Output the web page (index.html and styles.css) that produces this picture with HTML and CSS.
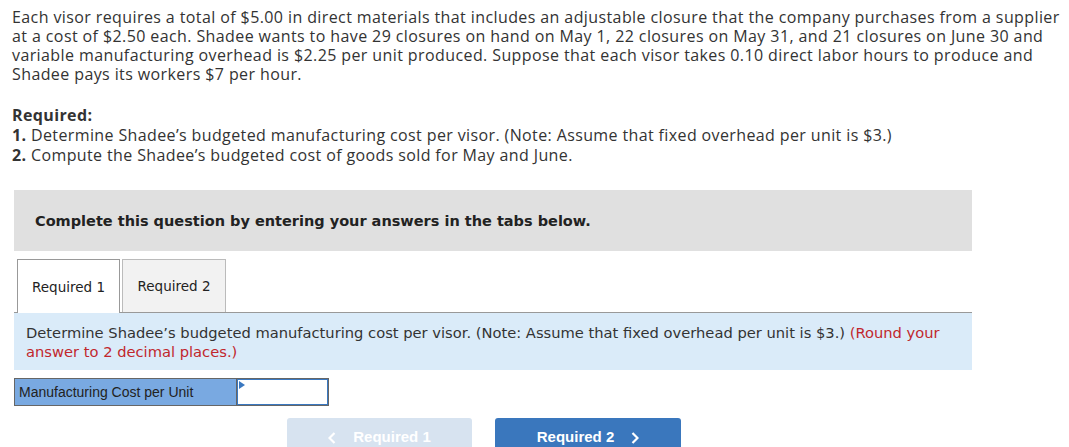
FILE: index.html
```html
<!DOCTYPE html>
<html>
<head>
<meta charset="utf-8">
<link rel="stylesheet" href="styles.css">
</head>
<body>
<div class="page">
  <p class="intro">Each visor requires a total of $5.00 in direct materials that includes an adjustable closure that the company purchases from a supplier at a cost of $2.50 each. Shadee wants to have 29 closures on hand on May 1, 22 closures on May 31, and 21 closures on June 30 and variable manufacturing overhead is $2.25 per unit produced. Suppose that each visor takes 0.10 direct labor hours to produce and Shadee pays its workers $7 per hour.</p>
  <div class="required">
    <div class="req-title">Required:</div>
    <div><b>1.</b> Determine Shadee’s budgeted manufacturing cost per visor. (Note: Assume that fixed overhead per unit is $3.)</div>
    <div><b>2.</b> Compute the Shadee’s budgeted cost of goods sold for May and June.</div>
  </div>
  <div class="panel">
    <div class="banner">Complete this question by entering your answers in the tabs below.</div>
    <div class="tabs">
      <div class="tab active">Required 1</div>
      <div class="tab">Required 2</div>
    </div>
    <div class="question">Determine Shadee’s budgeted manufacturing cost per visor. (Note: Assume that fixed overhead per unit is $3.) <span class="red">(Round your</span> <span class="red">answer to 2 decimal places.)</span></div>
    <div class="answer-row">
      <div class="label">Manufacturing Cost per Unit</div>
      <div class="input"><span class="flag"></span></div>
    </div>
    <div class="nav">
      <div class="btn prev"><svg class="chev" width="8" height="12" viewBox="0 0 8 12"><polyline points="6.5,1 1.5,6 6.5,11" fill="none" stroke="#fff" stroke-width="2.2"/></svg>Required 1</div>
      <div class="btn next">Required 2<svg class="chev" width="8" height="12" viewBox="0 0 8 12"><polyline points="1.5,1 6.5,6 1.5,11" fill="none" stroke="#fff" stroke-width="2.2"/></svg></div>
    </div>
  </div>
</div>
</body>
</html>
```
FILE: styles.css
```css
html, body {
  margin: 0;
  padding: 0;
  background: #fff;
}
.page {
  padding: 8px 0 0 12px;
  font-family: "Open Sans", "Lato", sans-serif;
  color: #333;
}
.intro {
  margin: 0;
  width: 1052px;
  font-size: 16px;
  letter-spacing: 0.4px;
  line-height: 19px;
}
.required {
  margin-top: 21px;
  font-size: 16px;
  letter-spacing: 0.38px;
  line-height: 20px;
}
.req-title {
  font-weight: bold;
}
.required b {
  font-weight: bold;
}
.panel {
  margin-top: 25px;
  margin-left: 2px;
  width: 958px;
  font-family: "DejaVu Sans", Verdana, sans-serif;
}
.banner {
  background: #e0e0e0;
  height: 61px;
  box-sizing: border-box;
  padding: 0 0 0 21px;
  display: flex;
  align-items: center;
  font-weight: bold;
  font-size: 14.5px;
  color: #222;
}
.tabs {
  display: flex;
  margin-top: 8px;
  padding-left: 3px;
  gap: 2px;
  border-bottom: 1px solid #999;
  height: 53px;
}
.tab {
  width: 104px;
  box-sizing: border-box;
  border: 1px solid #bbb;
  border-bottom: none;
  background: #f2f2f2;
  font-size: 13.5px;
  color: #222;
  display: flex;
  align-items: center;
  justify-content: center;
}
.tab.active {
  width: 103px;
  background: #fff;
  border-color: #999;
  height: 54px;
  position: relative;
  z-index: 1;
}
.question {
  background: #daebf9;
  padding: 10px 12px 9px 12px;
  font-size: 14.7px;
  line-height: 19px;
  color: #333;
}
.red {
  color: #c1272d;
}
.answer-row {
  display: flex;
  margin-top: 8px;
  height: 28px;
}
.label {
  width: 222px;
  box-sizing: border-box;
  background: #79a9e1;
  border: 1px solid #666;
  border-right: none;
  font-family: "Liberation Sans", Arial, sans-serif;
  font-size: 14px;
  color: #222;
  padding-left: 4px;
  display: flex;
  align-items: center;
}
.input {
  width: 93px;
  box-sizing: border-box;
  border: 1px solid #666;
  box-shadow: inset 0 0 0 1px #3a78c0;
  background: #fff;
  position: relative;
}
.flag {
  position: absolute;
  left: 2px;
  top: 2px;
  width: 0;
  height: 0;
  border-top: 4px solid transparent;
  border-bottom: 4px solid transparent;
  border-left: 6px solid #3a78c0;
}
.nav {
  display: flex;
  margin-top: 12px;
  margin-left: 273px;
  gap: 23px;
}
.btn {
  height: 40px;
  border-radius: 3px;
  font-family: "Liberation Sans", Arial, sans-serif;
  font-weight: bold;
  font-size: 15px;
  color: #fff;
  display: flex;
  justify-content: center;
  align-items: flex-start;
  padding-top: 10px;
  box-sizing: border-box;
}
.btn.prev {
  background: #d7e3f0;
  width: 185px;
}
.btn.next {
  background: #3a77bd;
  width: 186px;
}
.chev {
  margin-top: 4px;
}
.prev .chev {
  margin-right: 17px;
}
.next .chev {
  margin-left: 17px;
}
```
